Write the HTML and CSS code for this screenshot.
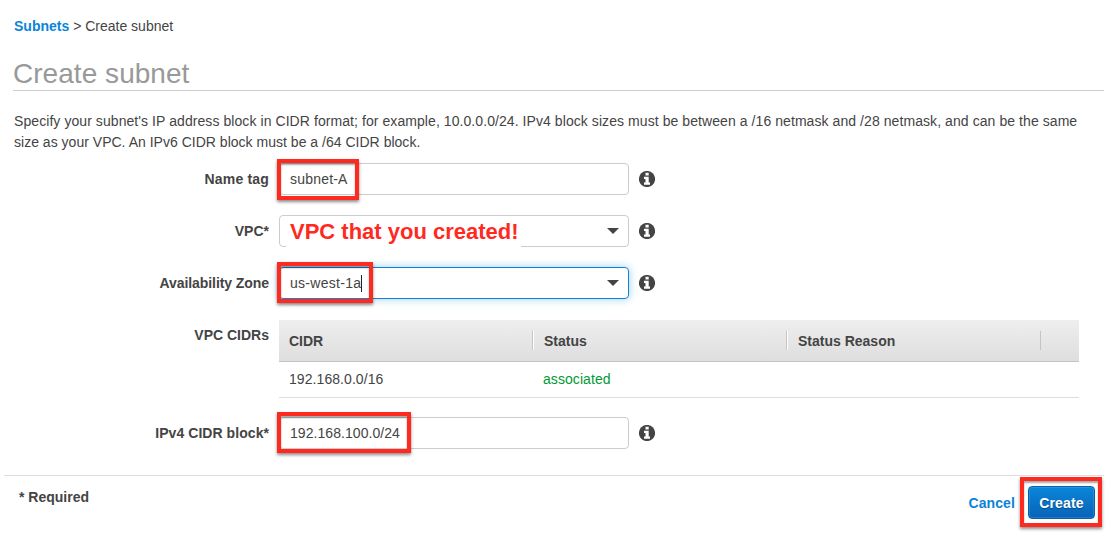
FILE: index.html
```html
<!DOCTYPE html>
<html lang="en">
<head>
<meta charset="utf-8">
<title>Create subnet</title>
<link rel="stylesheet" href="styles.css">
</head>
<body>
<svg class="sprite" width="0" height="0" aria-hidden="true">
  <symbol id="info" viewBox="0 0 16 16">
    <circle cx="8" cy="8" r="8.1" fill="#444"/>
    <path fill="#fff" d="M6.5 1.8h3.2v2.7H6.5zM5 5.8h4.7v5.8H11v2.1H5v-2.1h1.5V7.9H5z"/>
  </symbol>
</svg>
<nav class="crumbs"><a class="link" href="#">Subnets</a> <span class="crumb-current">&gt; Create subnet</span></nav>
<h1 class="title"><span class="title-text">Create subnet</span></h1>
<p class="intro"><span class="intro-a">Specify your subnet's IP address block in CIDR format; for example, 10.0.0.0/24. IPv4 block sizes must be between a /16 netmask and /28 netmask, and can be the same</span><br><span class="intro-b">size as your VPC. An IPv6 CIDR block must be a /64 CIDR block.</span></p>
<form class="form">
  <div class="row">
    <label class="label l-name">Name tag</label>
    <div class="field"><span class="value v-name">subnet-A</span><i class="mark mark-name"></i></div>
    <svg class="info"><use href="#info"/></svg>
  </div>
  <div class="row">
    <label class="label">VPC*</label>
    <div class="field"><span class="note">VPC that you created!</span><svg class="caret" viewBox="0 0 12 6"><path d="M0 0h12L6 6z"/></svg></div>
    <svg class="info"><use href="#info"/></svg>
  </div>
  <div class="row">
    <label class="label l-zone">Availability Zone</label>
    <div class="field focused"><span class="value v-zone">us-west-1a</span><i class="cursor"></i><svg class="caret" viewBox="0 0 12 6"><path d="M0 0h12L6 6z"/></svg><i class="mark mark-zone"></i></div>
    <svg class="info"><use href="#info"/></svg>
  </div>
  <div class="row row-table">
    <label class="label">VPC CIDRs</label>
    <div class="table">
      <div class="thead"><span class="th">CIDR</span><span class="th th-status">Status</span><span class="th th-reason">Status Reason</span><span class="th th-end"></span></div>
      <div class="tr"><span class="td">192.168.0.0/16</span><span class="td ok">associated</span></div>
    </div>
  </div>
  <div class="row">
    <label class="label l-cidr">IPv4 CIDR block*</label>
    <div class="field"><span class="value v-cidr">192.168.100.0/24</span><i class="mark mark-cidr"></i></div>
    <svg class="info"><use href="#info"/></svg>
  </div>
</form>
<footer class="footer">
  <span class="required">* Required</span>
  <div class="actions">
    <a class="link cancel" href="#">Cancel</a>
    <div class="create-wrap"><button class="create" type="button">Create</button><i class="mark mark-create"></i></div>
  </div>
</footer>
</body>
</html>
```
FILE: styles.css
```css
* { box-sizing: border-box; }
body {
  margin: 0;
  height: 537px;
  overflow: hidden;
  background: #fff;
  color: #444;
  font: 14px/21px "Liberation Sans", Arial, sans-serif;
}
.sprite { position: absolute; }
.link { color: #0a84d8; font-weight: bold; text-decoration: none; }
.crumbs { padding: 16px 0 0 14px; height: 37px; }
.title {
  margin: 0 7px 0 13px;
  height: 54px;
  padding-top: 21px;
  border-bottom: 1px solid #ccc;
  color: #999;
  font-size: 28px;
  font-weight: normal;
  line-height: 32px;
  letter-spacing: .04px;
}
.intro { margin: 20px 0 0 14px; height: 52px; white-space: nowrap; }
.intro-a { letter-spacing: .072px; }
.intro-b { letter-spacing: .015px; }
.form { display: flex; flex-direction: column; gap: 20px; }
.row { display: flex; height: 32px; align-items: center; }
.label { width: 269px; margin-right: 10px; text-align: right; font-weight: bold; white-space: nowrap; }
.l-name { letter-spacing: .18px; }
.l-zone { letter-spacing: -.07px; }
.l-cidr { letter-spacing: .06px; }
.field {
  position: relative;
  display: flex;
  align-items: center;
  width: 350px;
  height: 32px;
  padding: 0 9px 0 10px;
  border: 1px solid #ccc;
  border-radius: 4px;
  white-space: nowrap;
}
.focused { border-color: #0a84d8; box-shadow: 0 0 8px rgba(10, 132, 216, .4); }
.v-name { letter-spacing: .2px; }
.v-zone { letter-spacing: .28px; }
.v-cidr { letter-spacing: .06px; }
.caret { width: 12px; height: 6px; margin-left: auto; fill: #444; }
.cursor { width: 1px; height: 17px; background: #222; }
.note {
  align-self: flex-start;
  height: 32px;
  margin-left: -4px;
  padding: 1px 2px 0 4px;
  background: #fff;
  color: #ff2a1f;
  font-size: 22px;
  font-weight: bold;
  line-height: 30px;
}
.info { width: 16px; height: 16px; margin-left: 10px; overflow: visible; }
.mark {
  position: absolute;
  border: 4px solid #ff2a1f;
  box-shadow: 0 2px 3px rgba(0, 0, 0, .45), inset 0 2px 2px rgba(0, 0, 0, .35);
  pointer-events: none;
}
.mark-name { left: -3px; top: -5px; width: 82px; height: 41px; }
.mark-zone { left: -3px; top: -6px; width: 96px; height: 41px; }
.mark-cidr { left: -3px; top: -6px; width: 134px; height: 41px; }
.row-table { height: 78px; margin-top: 1px; margin-bottom: -1px; align-items: flex-start; }
.row-table .label { margin-top: 5px; }
.table { width: 800px; }
.thead {
  display: flex;
  align-items: center;
  height: 42px;
  background: linear-gradient(#eee, #dedede);
  border-bottom: 1px solid #c4c4c4;
  font-weight: bold;
}
.th { width: 254px; height: 19px; padding-left: 10px; line-height: 21px; border-right: 1px solid #c4c4c4; box-shadow: 1px 0 #fff; }
.th-status, .th-reason { padding-left: 11px; }
.th-reason { box-shadow: none; }
.th-end { width: 38px; border: 0; box-shadow: none; }
.tr { display: flex; height: 36px; border-bottom: 1px solid #ddd; }
.td { width: 254px; padding-left: 10px; line-height: 35px; letter-spacing: .07px; }
.ok { color: #093; }
.footer {
  display: flex;
  justify-content: space-between;
  margin: 26px 7px 0 4px;
  border-top: 1px solid #ddd;
}
.required { margin: 11px 0 0 15px; font-weight: bold; }
.actions { display: flex; align-items: center; gap: 13px; height: 33px; margin: 10px 9px 0 0; }
.cancel { padding-top: 1px; letter-spacing: .1px; }
.create-wrap { position: relative; }
.create {
  display: block;
  width: 67px;
  height: 33px;
  padding: 0;
  border: 1px solid #0760ad;
  border-radius: 4px;
  background: linear-gradient(#0a86d9, #0763b8);
  box-shadow: inset 0 0 0 1px rgba(255, 255, 255, .12);
  color: #fff;
  font: bold 14px "Liberation Sans", Arial, sans-serif;
  letter-spacing: .15px;
  text-shadow: 0 1px 1px rgba(0, 0, 0, .35);
}
.mark-create { left: -8px; top: -9px; width: 82px; height: 50px; }
```
